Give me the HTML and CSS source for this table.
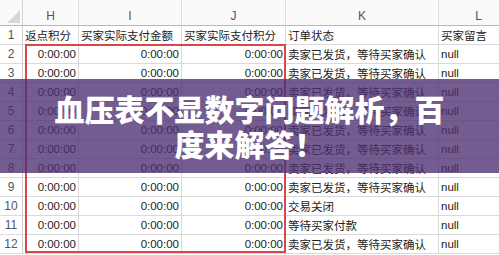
FILE: index.html
```html
<!DOCTYPE html>
<html lang="zh">
<head>
<meta charset="utf-8">
<link rel="stylesheet" href="styles.css">
</head>
<body>
<div class="page">
  <div class="sheet">
    <div class="corner"><svg width="23" height="26" viewBox="0 0 23 26"><polygon points="20,10 20,23 7,23" fill="#d8d8d8"/></svg></div>
    <div class="colhead">H</div>
    <div class="colhead">I</div>
    <div class="colhead">J</div>
    <div class="colhead">K</div>
    <div class="colhead">L</div>

    <div class="rowhead">1</div><div class="cell txt">返点积分</div><div class="cell txt">买家实际支付金额</div><div class="cell txt">买家实际支付积分</div><div class="cell txt">订单状态</div><div class="cell txt">买家留言</div>
    <div class="rowhead">2</div><div class="cell num">0:00:00</div><div class="cell num">0:00:00</div><div class="cell num">0:00:00</div><div class="cell txt">卖家已发货，等待买家确认</div><div class="cell txt">null</div>
    <div class="rowhead">3</div><div class="cell num">0:00:00</div><div class="cell num">0:00:00</div><div class="cell num">0:00:00</div><div class="cell txt">卖家已发货，等待买家确认</div><div class="cell txt">null</div>
    <div class="rowhead">4</div><div class="cell num">0:00:00</div><div class="cell num">0:00:00</div><div class="cell num">0:00:00</div><div class="cell txt">卖家已发货，等待买家确认</div><div class="cell txt">null</div>
    <div class="rowhead">5</div><div class="cell num">0:00:00</div><div class="cell num">0:00:00</div><div class="cell num">0:00:00</div><div class="cell txt">卖家已发货，等待买家确认</div><div class="cell txt">null</div>
    <div class="rowhead">6</div><div class="cell num">0:00:00</div><div class="cell num">0:00:00</div><div class="cell num">0:00:00</div><div class="cell txt">卖家已发货，等待买家确认</div><div class="cell txt">null</div>
    <div class="rowhead">7</div><div class="cell num">0:00:00</div><div class="cell num">0:00:00</div><div class="cell num">0:00:00</div><div class="cell txt">卖家已发货，等待买家确认</div><div class="cell txt">null</div>
    <div class="rowhead">8</div><div class="cell num">0:00:00</div><div class="cell num">0:00:00</div><div class="cell num">0:00:00</div><div class="cell txt">卖家已发货，等待买家确认</div><div class="cell txt">null</div>
    <div class="rowhead">9</div><div class="cell num">0:00:00</div><div class="cell num">0:00:00</div><div class="cell num">0:00:00</div><div class="cell txt">卖家已发货，等待买家确认</div><div class="cell txt">null</div>
    <div class="rowhead">10</div><div class="cell num">0:00:00</div><div class="cell num">0:00:00</div><div class="cell num">0:00:00</div><div class="cell txt">交易关闭</div><div class="cell txt">null</div>
    <div class="rowhead">11</div><div class="cell num">0:00:00</div><div class="cell num">0:00:00</div><div class="cell num">0:00:00</div><div class="cell txt">等待买家付款</div><div class="cell txt">null</div>
    <div class="rowhead">12</div><div class="cell num">0:00:00</div><div class="cell num">0:00:00</div><div class="cell num">0:00:00</div><div class="cell txt">卖家已发货，等待买家确认</div><div class="cell txt">null</div>
  </div>
  <div class="highlight"></div>
  <div class="banner">
    <h1 class="title">血压表不显数字问题解析，百<br>度来解答！</h1>
  </div>
</div>
</body>
</html>
```

FILE: styles.css
```css
html, body {
  margin: 0;
  padding: 0;
  background: #ffffff;
}
.page {
  position: relative;
  width: 499px;
  height: 255px;
  overflow: hidden;
  font-family: "Liberation Sans", "Noto Sans CJK SC", sans-serif;
  font-size: 11.5px;
  color: #222;
}
.sheet {
  display: grid;
  grid-template-columns: 23px 56px 103px 104px 153px 80px;
  grid-template-rows: 26px repeat(12, 19px);
}
.corner {
  background: #fafafa;
  border-right: 1px solid #d4d4d4;
  border-bottom: 1px solid #b8b8b8;
  box-sizing: border-box;
}
.corner svg { display: block; }
.colhead {
  background: #fafafa;
  color: #555;
  font-size: 12px;
  display: flex;
  align-items: center;
  justify-content: center;
  padding-top: 6px;
  border-right: 1px solid #dcdcdc;
  border-bottom: 1px solid #b8b8b8;
  box-sizing: border-box;
}
.rowhead {
  color: #555;
  font-size: 12px;
  display: flex;
  align-items: center;
  justify-content: center;
  border-right: 1px solid #cfcfcf;
  border-bottom: 1px solid #dcdcdc;
  box-sizing: border-box;
}
.cell {
  display: flex;
  align-items: center;
  white-space: nowrap;
  overflow: hidden;
  border-right: 1px solid #d9d9d9;
  border-bottom: 1px solid #d9d9d9;
  box-sizing: border-box;
}
.num {
  justify-content: flex-end;
  padding-right: 2px;
}
.txt {
  padding-left: 2px;
}
.highlight {
  position: absolute;
  left: 25px;
  top: 44px;
  width: 261px;
  height: 209px;
  border: 2px solid #d9474b;
  box-sizing: border-box;
}
.banner {
  position: absolute;
  left: 0;
  top: 79px;
  width: 100%;
  height: 94px;
  background: rgba(76, 46, 112, 0.78);
  display: flex;
  align-items: center;
  justify-content: center;
}
.title {
  margin: 0;
  color: #ffffff;
  font-family: "Noto Sans CJK SC", sans-serif;
  font-weight: 900;
  font-size: 30px;
  line-height: 35px;
  text-align: center;
}
```
